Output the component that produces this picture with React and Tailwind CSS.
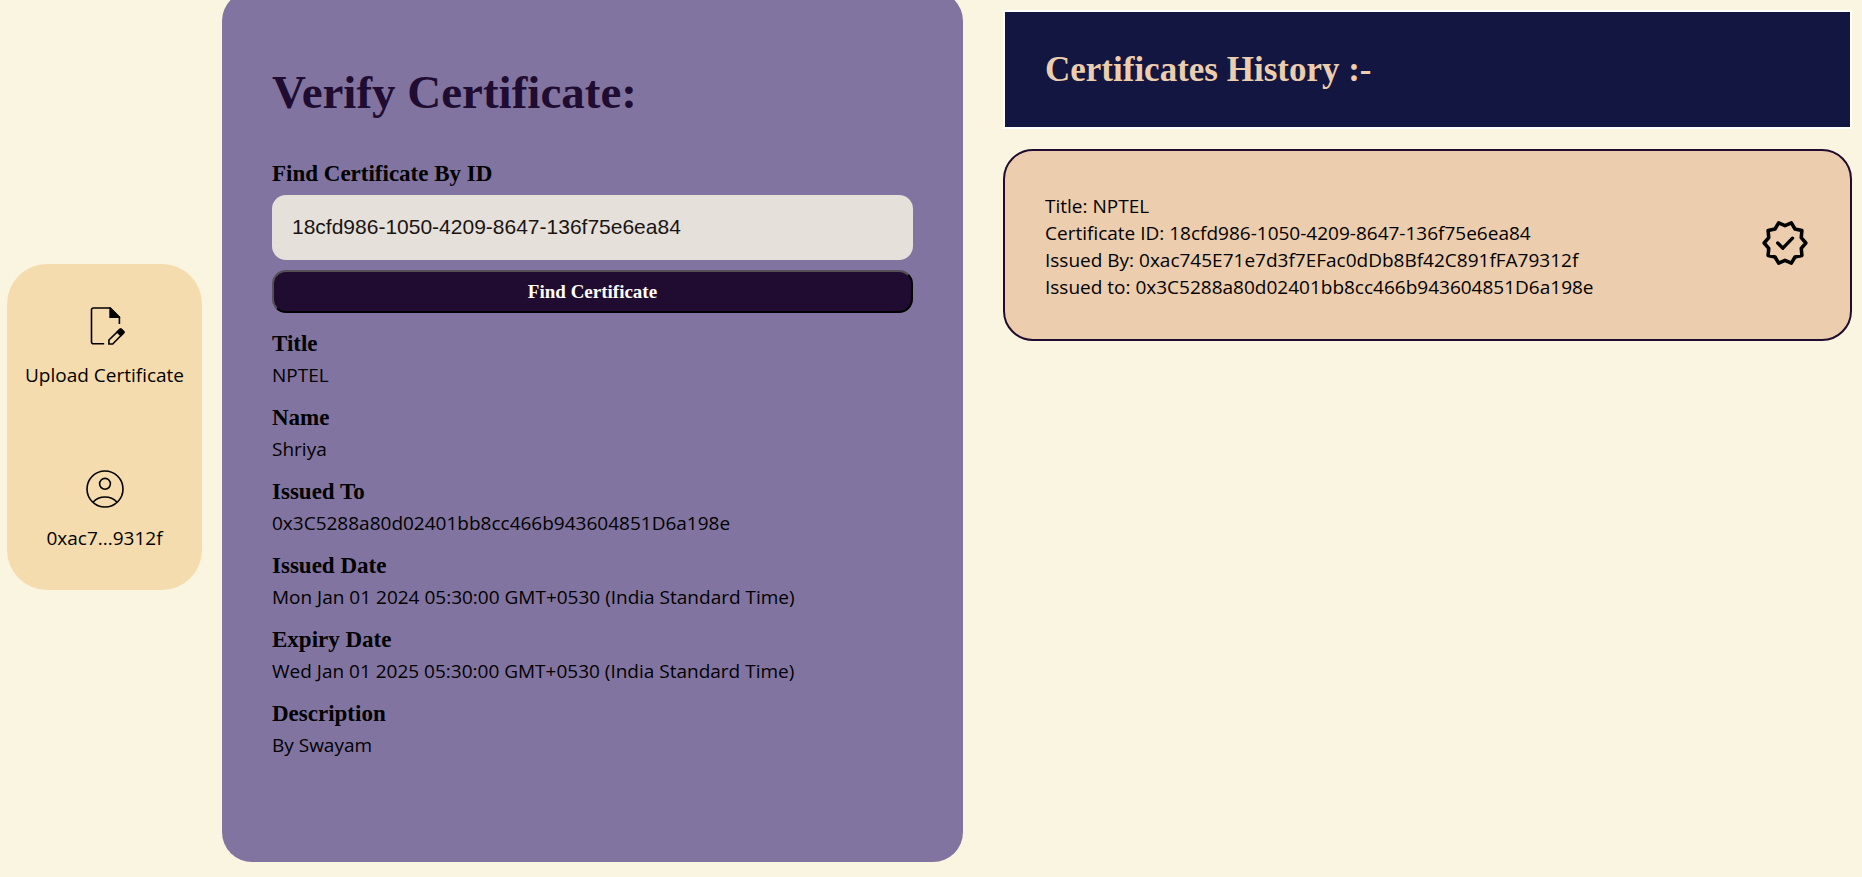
const details = [
  ["Title", "NPTEL"],
  ["Name", "Shriya"],
  ["Issued To", "0x3C5288a80d02401bb8cc466b943604851D6a198e"],
  ["Issued Date", "Mon Jan 01 2024 05:30:00 GMT+0530 (India Standard Time)"],
  ["Expiry Date", "Wed Jan 01 2025 05:30:00 GMT+0530 (India Standard Time)"],
  ["Description", "By Swayam"],
];

const history = [
  {
    title: "NPTEL",
    id: "18cfd986-1050-4209-8647-136f75e6ea84",
    by: "0xac745E71e7d3f7EFac0dDb8Bf42C891fFA79312f",
    to: "0x3C5288a80d02401bb8cc466b943604851D6a198e",
  },
];

function FileEditIcon() {
  return (
    <svg width="40" height="40" viewBox="0 0 40 40" fill="none" stroke="currentColor" strokeWidth="1.6" aria-hidden="true">
      <path d="M19.200 37.800H8.500a2 2 0 0 1-2-2V4a2 2 0 0 1 2-2h16.500l9.400 9.400v6.600" />
      <path d="M24.300 1.300V12h10.900v-1L25.500 1.300z" fill="currentColor" stroke="none" />
      <path d="M23.900 38v-4l11-10.600q.7-.6 1.400 0l2.200 2.200q.7.7 0 1.400L27.700 38z" />
      <path d="M32.200 26l2.700-2.600q.7-.6 1.400 0l2.200 2.200q.7.7 0 1.400l-2.600 2.600z" fill="currentColor" />
    </svg>
  );
}

function AccountIcon() {
  return (
    <svg width="40" height="40" viewBox="0 0 40 40" fill="none" stroke="currentColor" strokeWidth="1.6" aria-hidden="true">
      <circle cx="20" cy="20" r="18" />
      <circle cx="20" cy="14.800" r="5.400" />
      <path d="M8 33.200c3-3.300 7.200-5.200 12-5.200s9 1.900 12 5.200" />
    </svg>
  );
}

function VerifiedIcon() {
  return (
    <svg className="shrink-0" width="50" height="50" viewBox="0 0 24 24" fill="none" stroke="currentColor" strokeLinejoin="round" role="img" aria-label="Verified">
      <path
        strokeWidth="1.700"
        d="M22 12l-2.200 -2.570.31-3.390-3.320-.76-1.740-2.940L12 3.680 8.950 2.340 7.210 5.280 3.890 6.040 4.200 9.430 2 12l2.200 2.570-.31 3.390 3.320.76 1.740 2.940L12 20.320l3.050 1.340 1.740-2.940 3.320-.76-.31-3.390z"
      />
      <path strokeWidth="1.600" strokeLinecap="round" d="M8.500 12l2.500 2.500 4.600-4.800" />
    </svg>
  );
}

export default function App() {
  return (
    <div className="flex min-h-screen flex-col bg-[#faf5e1] font-['Open_Sans','Noto_Sans',sans-serif] text-[19px] leading-[27px] text-black">
      <div className="-mt-[9px] grid grid-cols-[195px_minmax(0,741fr)_minmax(0,869fr)] items-center gap-5 pr-2.5 pl-[7px]">
        <nav className="flex flex-col gap-20 rounded-[40px] bg-[#f5dcae] pt-[42px] pb-[38px]">
          <a href="#upload" className="flex flex-col items-center gap-4">
            <FileEditIcon />
            <span>Upload Certificate</span>
          </a>
          <a href="#account" className="flex flex-col items-center gap-4">
            <AccountIcon />
            <span>0xac7...9312f</span>
          </a>
        </nav>

        <main className="rounded-[30px] bg-[#8274a0] px-[50px] pt-[78px] pb-[103px]">
          <h1 className="font-['Georgia','Liberation_Serif',serif] text-[47px] leading-[46px] font-bold text-[#200c30]">
            Verify Certificate:
          </h1>
          <form className="mt-[46px] flex flex-col" onSubmit={(e) => e.preventDefault()}>
            <label htmlFor="cert-id" className="mb-2 font-['Georgia','Liberation_Serif',serif] text-[23px] leading-[26px] font-bold">
              Find Certificate By ID
            </label>
            <input
              id="cert-id"
              type="text"
              defaultValue="18cfd986-1050-4209-8647-136f75e6ea84"
              className="h-[65px] rounded-[14px] bg-[#e5e0da] px-5 pb-0.5 font-['Liberation_Sans',sans-serif] text-[21px] text-[#1a1414]"
            />
            <button
              type="submit"
              className="mt-2.5 h-[43px] rounded-[14px] border-2 border-t-[#555055] border-r-black border-b-black border-l-[#555055] bg-[#200c30] font-['Georgia','Liberation_Serif',serif] text-[19px] font-bold text-white"
            >
              Find Certificate
            </button>
          </form>
          <dl className="mt-[18px] flex flex-col gap-4">
            {details.map(([name, value]) => (
              <div key={name}>
                <dt className="font-['Georgia','Liberation_Serif',serif] text-[23px] leading-[26px] font-bold">{name}</dt>
                <dd className="pt-[5px]">{value}</dd>
              </div>
            ))}
          </dl>
        </main>

        <section className="mt-[19px] ml-5 self-start">
          <header className="border-2 border-white bg-[#121640] px-10 py-10">
            <h2 className="font-['Georgia','Liberation_Serif',serif] text-[35px] leading-[35px] font-bold text-[#eccdae]">
              Certificates History :-
            </h2>
          </header>
          <ul className="mt-5 flex flex-col gap-5">
            {history.map((c) => (
              <li
                key={c.id}
                className="flex items-center justify-between rounded-[30px] border-2 border-[#200c30] bg-[#eccdae] px-10 pt-[42px] pb-[38px]"
              >
                <div>
                  <p>Title: {c.title}</p>
                  <p>Certificate ID: {c.id}</p>
                  <p>Issued By: {c.by}</p>
                  <p>Issued to: {c.to}</p>
                </div>
                <span className="pb-2">
                  <VerifiedIcon />
                </span>
              </li>
            ))}
          </ul>
        </section>
      </div>
    </div>
  );
}
